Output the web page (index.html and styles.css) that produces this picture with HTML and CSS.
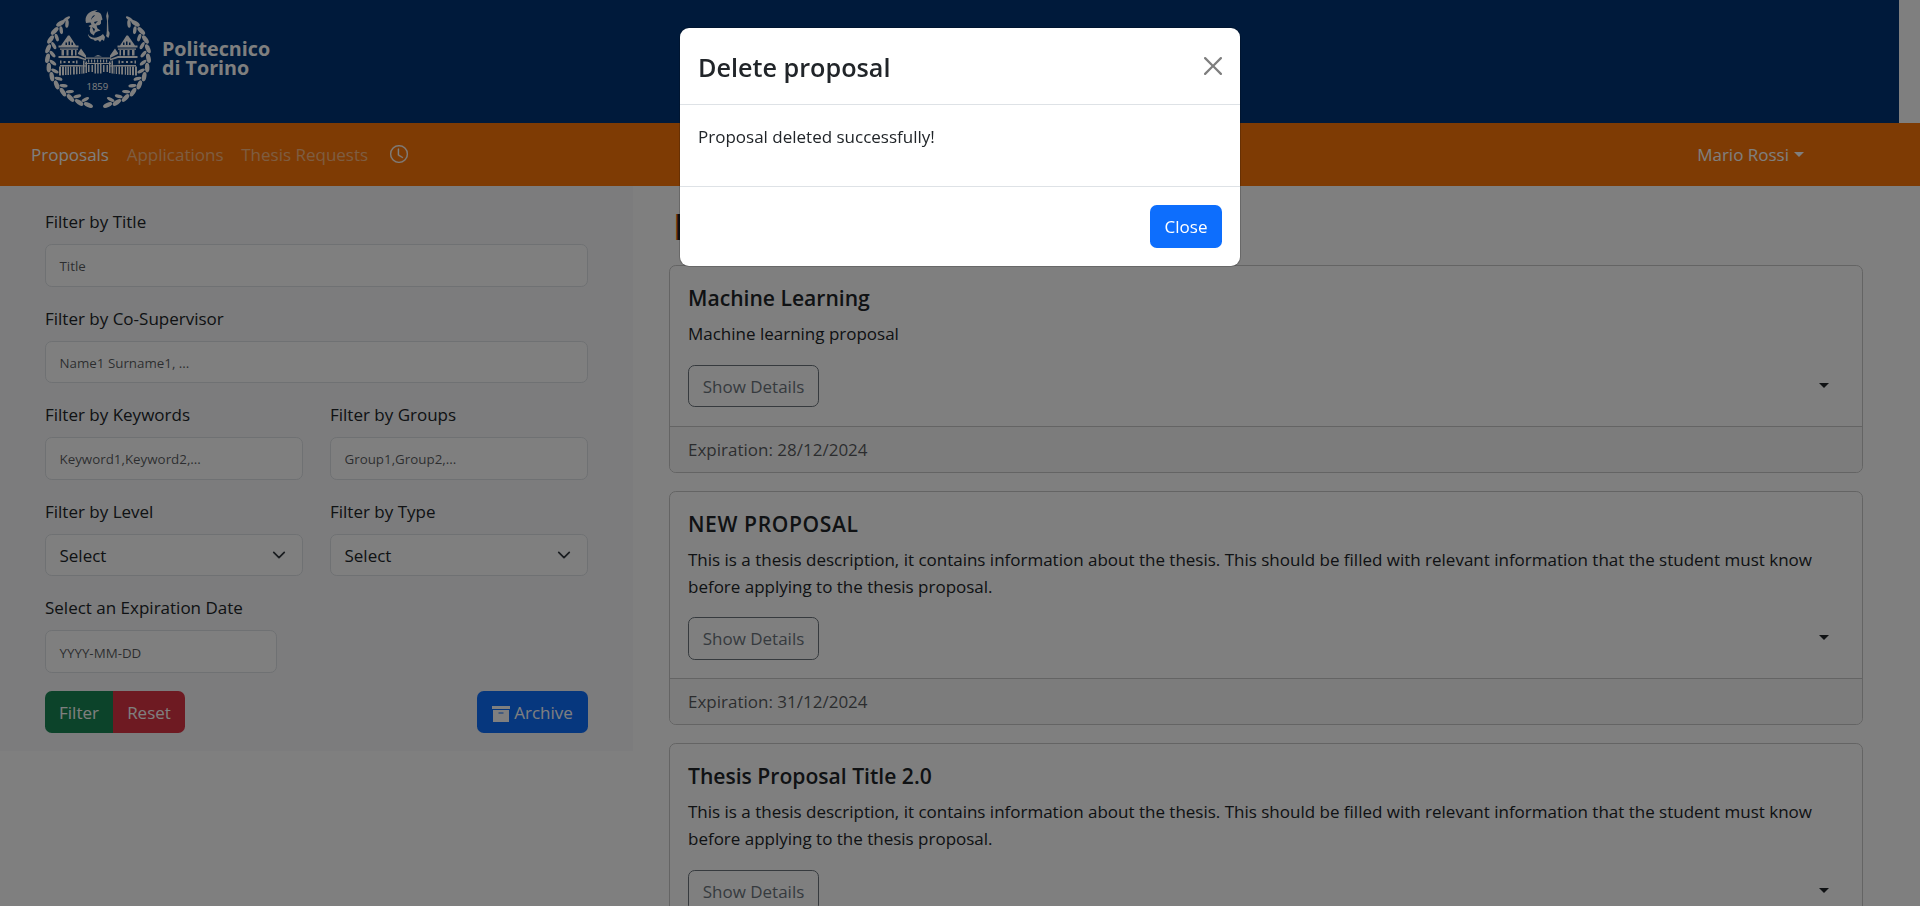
FILE: index.html
```html
<!DOCTYPE html>
<html lang="en">
<head>
<meta charset="utf-8">
<title>Proposals</title>
<link rel="stylesheet" href="styles.css">
</head>
<body>
<header class="banner">
<svg class="logo" width="290" height="123" viewBox="0 0 290 123" fill="#fff">
<defs>
<g id="leaves"><ellipse cx="98" cy="105.500" rx="4.800" ry="2.200" transform="rotate(-14 98 105.500)"/><ellipse cx="102" cy="100.500" rx="4" ry="1.700" transform="rotate(38 102 100.500)"/></g>
<g id="branch">
<use href="#leaves" transform="rotate(-11 98 56)"/><use href="#leaves" transform="rotate(-22 98 56)"/><use href="#leaves" transform="rotate(-33 98 56)"/><use href="#leaves" transform="rotate(-44 98 56)"/><use href="#leaves" transform="rotate(-55 98 56)"/><use href="#leaves" transform="rotate(-66 98 56)"/><use href="#leaves" transform="rotate(-77 98 56)"/><use href="#leaves" transform="rotate(-88 98 56)"/><use href="#leaves" transform="rotate(-99 98 56)"/><use href="#leaves" transform="rotate(-110 98 56)"/><use href="#leaves" transform="rotate(-121 98 56)"/><use href="#leaves" transform="rotate(-132 98 56)"/>
<ellipse cx="129" cy="18.500" rx="4.200" ry="1.600" transform="rotate(35 129 18.500)"/>
</g>
<g id="wing">
<path d="M68 35h1.500l6.500 10h2.500v2H58.500v-2h2.500zM60 48h18v1.200H60zM58.500 55.500H78l8 3v1.500l-8-2.500H58.500zM60 64.500h18l8 .5v1H60z"/>
<path fill="#003576" d="M65.500 42h1.500v2.500h-1.500zM68.500 41h1.500v3.500h-1.500zM71.500 42h1.500v2.500h-1.500z"/>
<path d="M61.500 49.500H64V55h-2.500zM66.500 49.500h2V55h-2zM71 49.500h2V55h-2zM75 49.500h1.500V55H75zM60 60h1.500v3H60zM63.500 60.500h2v2h-2zM68 60.500h2v2h-2zM72.500 60.500h2v2h-2zM76 60h1.500v3H76z"/>
<path d="M59 66h2v9h-2zM62 66h2v8.800h-2zM65 66h1.500v8.600H65zM67.500 66H69v8.500h-1.500zM70 66h1.200v8.300H70zM73 66h1.800v8H73zM76 66h1.500v7.800H76zM79 66h1.200v7.500H79zM81.500 66h1v7.300h-1z"/>
<path d="M81 48l5 7v2.500l-8-4v-1zM83 60h1.500v13H83zM85.500 61H87v11.500h-1.500z"/>
</g>
</defs>
<g transform="matrix(1.020 0 0 1 -1.960 .5)"><use href="#branch"/><use href="#branch" transform="matrix(-1 0 0 1 196 0)"/></g>
<g transform="translate(0 .5)"><use href="#wing"/><use href="#wing" transform="matrix(-1 0 0 1 196 0)"/>
<path d="M85 57h26v1.200H85zM85 62.500h26v.9H85zM94 56l4-1.500 4 1.500zM88 59h1.200v3H88zM91 59h1.200v3H91zM94 59h1.200v3H94zM97 59h1.200v3H97zM100 59h1.200v3H100zM103 59h1.200v3H103zM106 59h1.200v3H106zM88 64.500h1.500v7H88zM91.500 64.500H93v7h-1.500zM94.500 63.500H96V73h-1.500zM97.200 63.500h1.500V73h-1.500zM100 63.500h1.500V73H100zM103 64.500h1.500v7H103zM106.500 64.500h1.500v7h-1.500z"/></g>
<path d="M86 23c-2-7 3-12.500 11.500-13l-2.500 2c4-.5 6 1 6.500 3.500l1 4-1.500 1v3l-1.500 1.500-3 .5 1 3 3 2c-4 1-6 2-6.500 5l-3-2c-1.500-2-1.500-4-.5-6l-2-1.500 3-1.500-1-2zM88 34c3 5 9 5 15 0l2 3-1 4-2-1.500-2 2.500-2-2-3 1-1.500-1.500c-3 0-5.500-3-5.500-5.500z"/>
<path fill="#003576" d="M91 20c.5-3 2-4.500 4-5l-1 1.500c-1.500.8-2 2-3 3.500zM94 22l4-1-3 3zM92 27l3 2-1 3z"/>
<path d="M107.300 11l1.300 5-.6 5 .5 10c1.500 1 1.500 4-.2 7l-2.300-2c.7-1 .5-3 .8-5l.2-10-.8-5z"/>
<text class="logo-year" x="86.500" y="90">1859</text>
<text class="logo-name" x="162" y="55.500">Politecnico</text>
<text class="logo-name" x="162" y="75">di Torino</text>
</svg>
</header>
<nav class="nav">
<a class="nav-link nav-link-active">Proposals</a>
<a class="nav-link">Applications</a>
<a class="nav-link">Thesis Requests</a>
<svg class="clock" viewBox="0 0 16 16" width="18" height="18" fill="#fff" stroke="#fff" stroke-width=".3"><path d="M8 3.500a.5.5 0 0 0-1 0V9a.5.5 0 0 0 .252.434l3.500 2a.5.5 0 0 0 .496-.868L8 8.710z"/><path d="M8 16A8 8 0 1 0 8 0a8 8 0 0 0 0 16m7-8A7 7 0 1 1 1 8a7 7 0 0 1 14 0"/></svg>
<a class="user">Mario Rossi<span class="caret caret-user"></span></a>
</nav>
<main class="page">
<aside class="filters">
<div class="field field-wide"><label>Filter by Title</label><div class="control placeholder">Title</div></div>
<div class="field field-wide"><label>Filter by Co-Supervisor</label><div class="control placeholder">Name1 Surname1, ...</div></div>
<div class="field"><label>Filter by Keywords</label><div class="control placeholder">Keyword1,Keyword2,...</div></div>
<div class="field"><label>Filter by Groups</label><div class="control placeholder">Group1,Group2,...</div></div>
<div class="field"><label>Filter by Level</label><div class="control select">Select<svg width="18" height="14" viewBox="0 0 16 16"><path fill="none" stroke="#343a40" stroke-linecap="round" stroke-linejoin="round" stroke-width="2" d="m2 5 6 6 6-6"/></svg></div></div>
<div class="field"><label>Filter by Type</label><div class="control select">Select<svg width="18" height="14" viewBox="0 0 16 16"><path fill="none" stroke="#343a40" stroke-linecap="round" stroke-linejoin="round" stroke-width="2" d="m2 5 6 6 6-6"/></svg></div></div>
<div class="field field-wide"><label>Select an Expiration Date</label><div class="control placeholder date">YYYY-MM-DD</div></div>
<div class="actions">
<div class="group"><button class="btn btn-filter">Filter</button><button class="btn btn-reset">Reset</button></div>
<button class="btn btn-blue btn-archive"><svg width="18" height="18" viewBox="0 0 18 18" fill="#fff"><path d="M0 1h18v3H0zM1 5h16v12H1zM6.500 7.500v1h5v-1z" fill-rule="evenodd"/></svg>Archive</button>
</div>
</aside>
<section class="content">
<h1>Proposals</h1>
<article class="card"><div class="card-body"><h2>Machine Learning</h2><p>Machine learning proposal</p><div class="card-row"><button class="btn btn-outline">Show Details</button><span class="caret caret-card"></span></div></div><footer>Expiration: 28/12/2024</footer></article>
<article class="card"><div class="card-body"><h2 class="caps">NEW PROPOSAL</h2><p>This is a thesis description, it contains information about the thesis. This should be filled with relevant information that the student must know<br>before applying to the thesis proposal.</p><div class="card-row"><button class="btn btn-outline">Show Details</button><span class="caret caret-card"></span></div></div><footer>Expiration: 31/12/2024</footer></article>
<article class="card"><div class="card-body"><h2>Thesis Proposal Title 2.0</h2><p>This is a thesis description, it contains information about the thesis. This should be filled with relevant information that the student must know<br>before applying to the thesis proposal.</p><div class="card-row"><button class="btn btn-outline">Show Details</button><span class="caret caret-card"></span></div></div></article>
</section>
</main>
<div class="backdrop">
<div class="modal">
<div class="modal-header"><span class="modal-title">Delete proposal</span><svg width="18" height="18" viewBox="0 0 16 16" fill="#000" opacity=".5"><path d="M.293.293a1 1 0 0 1 1.414 0L8 6.586 14.293.293a1 1 0 1 1 1.414 1.414L9.414 8l6.293 6.293a1 1 0 0 1-1.414 1.414L8 9.414l-6.293 6.293a1 1 0 0 1-1.414-1.414L6.586 8 .293 1.707a1 1 0 0 1 0-1.414"/></svg></div>
<div class="modal-body">Proposal deleted successfully!</div>
<div class="modal-footer"><button class="btn btn-blue btn-close">Close</button></div>
</div>
</div>
</body>
</html>
```
FILE: styles.css
```css
* { box-sizing: border-box; }
html, body { height: 100%; }
body { margin: 0; overflow: hidden; background: #fff; color: #212529; font: 17px/27px "Open Sans", sans-serif; }
.banner { width: 1899px; height: 123px; background: #003576; }
.logo { display: block; }
.logo-year { font: 400 9.500px "Open Sans", sans-serif; }
.logo-name { font: 700 19.700px "Open Sans", sans-serif; }
.nav { display: flex; align-items: center; gap: 17.700px; height: 63px; padding: 0 116px 1px 31px; background: #fc7608; color: #fff; }
.nav-link { color: rgba(255, 255, 255, .5); }
.nav-link-active { color: #fff; }
.clock { margin: 0 0 0 4px; }
.user { display: flex; align-items: center; margin-left: auto; }
.caret { border: 5px solid transparent; border-top-color: currentColor; border-bottom: 0; }
.caret-user { margin: 0 0 0 5px; }
.caret-card { margin-bottom: 2px; }
.page { display: flex; align-items: flex-start; }
.filters { display: grid; grid-template-columns: 258px 258px; column-gap: 27px; row-gap: 18px; width: 633px; height: 565px; padding: 22px 45px 18px; background: #f8f9fa; align-content: start; }
.field-wide, .actions { grid-column: span 2; }
.field label { display: block; height: 27px; margin-bottom: 9px; line-height: 27px; }
.control { display: flex; align-items: center; justify-content: space-between; height: 42.600px; padding: 0 14.500px 0 13.500px; border: 1px solid #dee2e6; border-radius: 6.750px; background: #fff; }
.placeholder { padding-top: 3px; font-size: 13.350px; color: rgba(33, 37, 41, .75); }
.date { width: 232px; }
.actions { display: flex; justify-content: space-between; }
.group { display: flex; }
.btn { height: 42.500px; padding: 0 12.500px; border: 1px solid transparent; border-radius: 6.750px; font: 17px/27px "Open Sans", sans-serif; color: #fff; }
.btn-filter { width: 68px; background: #198754; border-radius: 6.750px 0 0 6.750px; }
.btn-reset { width: 72px; background: #dc3545; border-radius: 0 6.750px 6.750px 0; }
.btn-blue { background: #0d6efd; }
.btn-archive { display: flex; align-items: center; justify-content: center; gap: 4px; width: 111px; }
.btn-archive svg { margin-top: 3px; }
.btn-outline { width: 131px; border-color: #6c757d; background: transparent; color: #6c757d; }
.content { flex: 1; padding: 18px 57px 0 36px; }
h1 { height: 43px; margin: 0 0 18px; padding-left: 5px; font-size: 36px; line-height: 45px; font-weight: 700; text-shadow: -1px 0 #fc7a08; }
.card { margin-bottom: 18px; border: 1px solid #c8c8c8; border-radius: 6.750px; }
.card-body { padding: 18px; }
h2 { height: 27px; margin: 0 0 9px; font-size: 21.100px; line-height: 27px; font-weight: 600; }
.caps { letter-spacing: .6px; }
p { margin: 0 0 17.500px; line-height: 27px; letter-spacing: -.007px; }
.card-row { display: flex; justify-content: space-between; align-items: center; height: 43px; padding-right: 15px; }
footer { height: 46px; padding: 9px 18px; border-top: 1px solid #c8c8c8; border-radius: 0 0 6px 6px; background: #f8f8f8; color: rgba(33, 37, 41, .75); }
.backdrop { position: fixed; inset: 0; display: flex; justify-content: center; align-items: flex-start; padding-top: 28px; background: rgba(0, 0, 0, .5); }
.modal { width: 560px; height: 238px; border-radius: 9px; background: #fff; box-shadow: 0 0 0 1px rgba(0, 0, 0, .18); }
.modal-header { display: flex; justify-content: space-between; align-items: center; height: 77px; padding: 0 18px; border-bottom: 1px solid #dee2e6; }
.modal-title { padding-top: 2px; font-size: 25.200px; line-height: 40px; font-weight: 600; }
.modal-body { height: 82px; padding: 18px; border-bottom: 1px solid #dee2e6; }
.modal-footer { display: flex; justify-content: flex-end; padding: 18px; }
.btn-close { width: 72px; }
```
